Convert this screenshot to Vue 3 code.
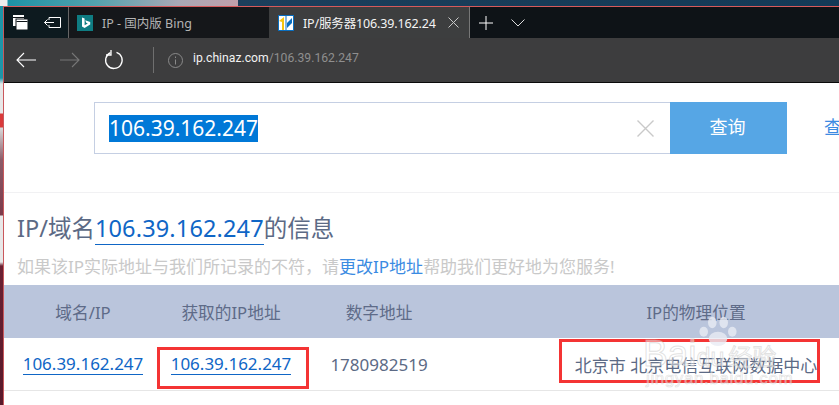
<script setup>
const rows = ['106.39.162.247', '106.39.162.247']
</script>

<template>
  <div class="screen">
    <div class="window">
      <div class="tabbar">
        <div class="tools">
          <svg width="15" height="15" viewBox="0 0 15 15"><rect x="0" y="0" width="11" height="11" fill="#fff"/><rect x="0" y="2" width="11" height="1" fill="#0e1418"/><rect x="3" y="4" width="12" height="11" fill="#fff" stroke="#0e1418"/><rect x="3.500" y="6" width="11" height="1" fill="#0e1418"/></svg>
          <svg width="17" height="11" viewBox="0 0 17 11" fill="none" stroke="#fff"><path d="M5 .5h11.500v10H5M5 .5v2.500M5 10.500V8"/><path d="M.5 5.500H10M3.500 2.500l-3 3 3 3"/></svg>
        </div>
        <div class="tab">
          <svg class="fav" width="16" height="16" viewBox="0 0 16 16"><rect width="16" height="16" fill="#0f7c82"/><path d="M5 2.500l2.600.9v6.900l3.200-1.800-1.600-.8-1-2.400 5 1.700v2.600L7.600 13 5 11.500z" fill="#fff"/></svg>
          <span class="tab-text">IP - 国内版 Bing</span>
        </div>
        <div class="tab active">
          <svg class="fav" width="16" height="16" viewBox="0 0 16 16"><rect width="16" height="16" fill="#0a6fc0"/><rect x="1" y="1" width="6.500" height="14" fill="#fff"/><rect x="8.500" y="1" width="6.500" height="14" fill="#fff"/><path d="M1 6l5-4v13H4V7z" fill="#f6c40f"/><path d="M9 8l5-5v5l-5 5z" fill="#0a6fc0"/></svg>
          <span class="tab-text">IP/服务器106.39.162.24</span>
          <svg class="close" width="11" height="11" viewBox="0 0 11 11" stroke="#c8c8c8"><path d="M.5.500l10 10M10.500.500l-10 10"/></svg>
        </div>
        <svg class="plus" width="14" height="14" viewBox="0 0 14 14" stroke="#fff"><path d="M7 0v14M0 7h14"/></svg>
        <svg class="chev" width="14" height="8" viewBox="0 0 14 8" fill="none" stroke="#ddd"><path d="M.5.500L7 7 13.500.5"/></svg>
      </div>

      <div class="toolbar">
        <svg class="back" width="20" height="16" viewBox="0 0 20 16" fill="none" stroke="#fff" stroke-width="1.100"><path d="M20 8H1M8 1L1 8l7 7"/></svg>
        <svg class="fwd" width="20" height="16" viewBox="0 0 20 16" fill="none" stroke="#777" stroke-width="1.100"><path d="M0 8h19M12 1l7 7-7 7"/></svg>
        <svg class="reload" width="20" height="20" viewBox="0 0 20 20" fill="none" stroke="#fff" stroke-width="1.300"><path d="M12.500 2.300a8.300 8.300 0 1 1-6 .3"/><path d="M7 0v5H2"/></svg>
        <span class="sep"></span>
        <svg class="info" width="15" height="15" viewBox="0 0 15 15" fill="none" stroke="#8a8a8a"><circle cx="7.500" cy="7.500" r="7"/><path d="M7.500 6.500V11.500M7.500 3.500v1.500"/></svg>
        <span class="url"><b>ip.chinaz.com</b>/106.39.162.247</span>
      </div>

      <div class="page">
        <div class="search-area">
          <div class="search-box">
            <span class="selected">106.39.162.247</span>
            <svg class="clear" width="17" height="17" viewBox="0 0 17 17" stroke="#c9c9c9" stroke-width="1.400"><path d="M.5.500l16 16M16.500.500l-16 16"/></svg>
          </div>
          <div class="search-btn">查询</div>
          <a class="side-link">查</a>
        </div>

        <h1 class="title">IP/域名<a>106.39.162.247</a>的信息</h1>
        <p class="hint">如果该IP实际地址与我们所记录的不符&#xFF0C;请<a>更改IP地址</a>帮助我们更好地为您服务!</p>

        <div class="table">
          <div class="th">域名/IP</div>
          <div class="th">获取的IP地址</div>
          <div class="th">数字地址</div>
          <div class="th">IP的物理位置</div>
          <div class="td"><a>{{ rows[0] }}</a></div>
          <div class="td"><a>{{ rows[1] }}</a></div>
          <div class="td">1780982519</div>
          <div class="td">北京市 北京电信互联网数据中心</div>
        </div>
      </div>
    </div>

    <div class="mark mark-a"></div>
    <div class="mark mark-b"></div>

    <div class="watermark">
      <svg class="paw" width="42" height="30" viewBox="0 0 54 42" fill="#e9ecf4" opacity=".8"><ellipse cx="7" cy="22" rx="6" ry="7"/><ellipse cx="19" cy="9" rx="6" ry="8"/><ellipse cx="35" cy="9" rx="6" ry="8"/><ellipse cx="47" cy="22" rx="6" ry="7"/><ellipse cx="27" cy="32" rx="13" ry="10"/></svg>
      <div class="wm-main">Bai<span class="wm-du">du</span><span class="wm-cn">经验</span></div>
      <div class="wm-sub">jingyan.baidu.com</div>
    </div>
  </div>
</template>

<style>
html, body { margin: 0; background: #fff; }
</style>

<style scoped>
.screen {
  position: relative;
  width: 839px;
  height: 405px;
  overflow: hidden;
  box-sizing: border-box;
  padding: 6px 0 0 3px;
  font-family: "Noto Sans", "Noto Sans CJK SC", sans-serif;
  background:
    linear-gradient(90deg, #ededed 0 7px, #1d92a6 8px, #53a2ad 40%, #a9a9b6 75%, #c0a0ab 100%) 0 0 / 238px 6px no-repeat,
    linear-gradient(90deg, #1c3f5c, #173c58 50%, #133a57) 238px 0 / 601px 6px no-repeat,
    linear-gradient(180deg, #d83a3a 0 5px, #1e95a8 6px 78px, #e8e8e8 84px 113px, #d93a3a 114px 127px, #d9d9d9 128px, #8c5b68 160px, #7c3a4a 215px, #e8e8e8 216px 262px, #6b2133 266px, #58192a 405px);
}
.window {
  width: 836px;
  height: 399px;
  border-top: 1px solid #d65a5c;
  border-left: 1px solid #c9585c;
  box-sizing: border-box;
  background: #fff;
  display: flex;
  flex-direction: column;
}
.tabbar {
  height: 31px;
  flex: none;
  display: flex;
  align-items: center;
  background: #0e1317;
}
.tools {
  width: 65px;
  flex: none;
  height: 100%;
  display: flex;
  align-items: center;
  box-sizing: border-box;
  padding-left: 9px;
  gap: 16px;
  background: #0d1a1f;
  border-right: 1px solid #666;
}
.tab {
  width: 200px;
  flex: none;
  height: 100%;
  box-sizing: border-box;
  display: flex;
  align-items: center;
  padding-left: 8px;
  background: #15171a;
  color: #b4b4b4;
  font-size: 12.500px;
}
.tab.active {
  background: #3d3e3f;
  color: #f4f4f4;
  padding-left: 9px;
  border-right: 1px solid #777;
  width: 201px;
}
.active .tab-text { letter-spacing: -.15px; }
.fav { flex: none; margin-right: 9px; }
.tab-text { white-space: nowrap; }
.close { margin-left: 12px; }
.plus { margin-left: 9px; }
.chev { margin-left: 18px; }
.toolbar {
  height: 44px;
  flex: none;
  display: flex;
  align-items: center;
  background: #3d3d3e;
  border-bottom: 1px solid #0a0a0a;
}
.back { margin-left: 12px; }
.fwd { margin-left: 24px; }
.reload { margin-left: 24px; }
.sep { width: 1px; height: 26px; background: #6f6f6f; margin-left: 29px; }
.info { margin-left: 14px; }
.url {
  margin-left: 10px;
  font-family: Roboto, "Noto Sans", sans-serif;
  font-size: 12.200px;
  color: #8f8f8f;
  white-space: nowrap;
  margin-top: -5px;
}
.url b { font-weight: 400; color: #f2f2f2; }
.page { flex: 1; min-height: 0; background: #fff; }
.search-area {
  height: 110px;
  box-sizing: border-box;
  padding: 19px 0 0 90px;
  display: flex;
  align-items: flex-start;
  border-bottom: 1px solid #f1f1f3;
}
.search-box {
  width: 576px;
  flex: none;
  height: 52px;
  box-sizing: border-box;
  border: 1px solid #c5cfe3;
  border-right: 0;
  display: flex;
  align-items: center;
  padding-left: 14px;
}
.selected {
  background: #0078d7;
  color: #fff;
  font-size: 21px;
  line-height: 27px;
  height: 27px;
}
.clear { margin-left: auto; margin-right: 16px; }
.search-btn {
  width: 115px;
  padding-right: 2px;
  flex: none;
  height: 52px;
  line-height: 51px;
  text-align: center;
  background: #56a6e5;
  color: #fff;
  font-size: 18px;
}
.side-link {
  flex: none;
  margin-left: 37px;
  line-height: 51px;
  font-size: 18px;
  color: #3d8be2;
}
.title {
  margin: 18px 0 0 13px;
  height: 34px;
  font-size: 23.500px;
  line-height: 34px;
  font-weight: 400;
  color: #5c6a85;
  white-space: nowrap;
}
.title a { color: #0f66c6; border-bottom: 1px solid #0f66c6; letter-spacing: .15px; }
.hint {
  margin: 9px 0 0 13px;
  height: 26px;
  font-size: 17px;
  line-height: 26px;
  color: #c9c9c9;
  white-space: nowrap;
}
.hint a { color: #3b8be2; }
.table {
  margin-top: 5px;
  width: 930px;
  display: grid;
  grid-template-columns: 158px 138px 158px 476px;
  grid-template-rows: 53px 52px;
  border-bottom: 1px solid #e6e6e6;
  font-size: 17px;
}
.th, .td {
  display: flex;
  align-items: center;
  justify-content: center;
  white-space: nowrap;
}
.th { background: #bac5dc; color: #5e6b88; font-size: 16.700px; }
.td { color: #5c6a85; }
.td a { color: #0f66c6; border-bottom: 1px solid #0f66c6; line-height: 20px; }
.mark {
  position: absolute;
  box-sizing: border-box;
  border: 3px solid #f43434;
}
.mark-a { left: 157px; top: 347px; width: 152px; height: 42px; }
.mark-b { left: 559px; top: 339px; width: 261px; height: 44px; }
.watermark {
  position: absolute;
  left: 640px;
  top: 316px;
  width: 170px;
  height: 72px;
  pointer-events: none;
}
.paw { position: absolute; left: 57px; top: 0; }
.wm-main {
  position: absolute;
  left: 3px;
  top: 16px;
  font-family: "Liberation Sans", sans-serif;
  font-size: 37px;
  line-height: 44px;
  white-space: nowrap;
  color: rgba(255, 255, 255, .45);
  -webkit-text-stroke: 1px rgba(190, 190, 190, .45);
}
.wm-du { font-size: 25px; }
.wm-cn { font-family: "Noto Sans CJK SC", sans-serif; font-size: 24px; margin-left: 4px; }
.wm-sub {
  position: absolute;
  left: 6px;
  top: 54px;
  font-family: "Liberation Sans", sans-serif;
  font-size: 17px;
  line-height: 18px;
  letter-spacing: .6px;
  white-space: nowrap;
  color: rgba(255, 255, 255, .45);
  -webkit-text-stroke: .6px rgba(190, 190, 190, .5);
}
</style>
